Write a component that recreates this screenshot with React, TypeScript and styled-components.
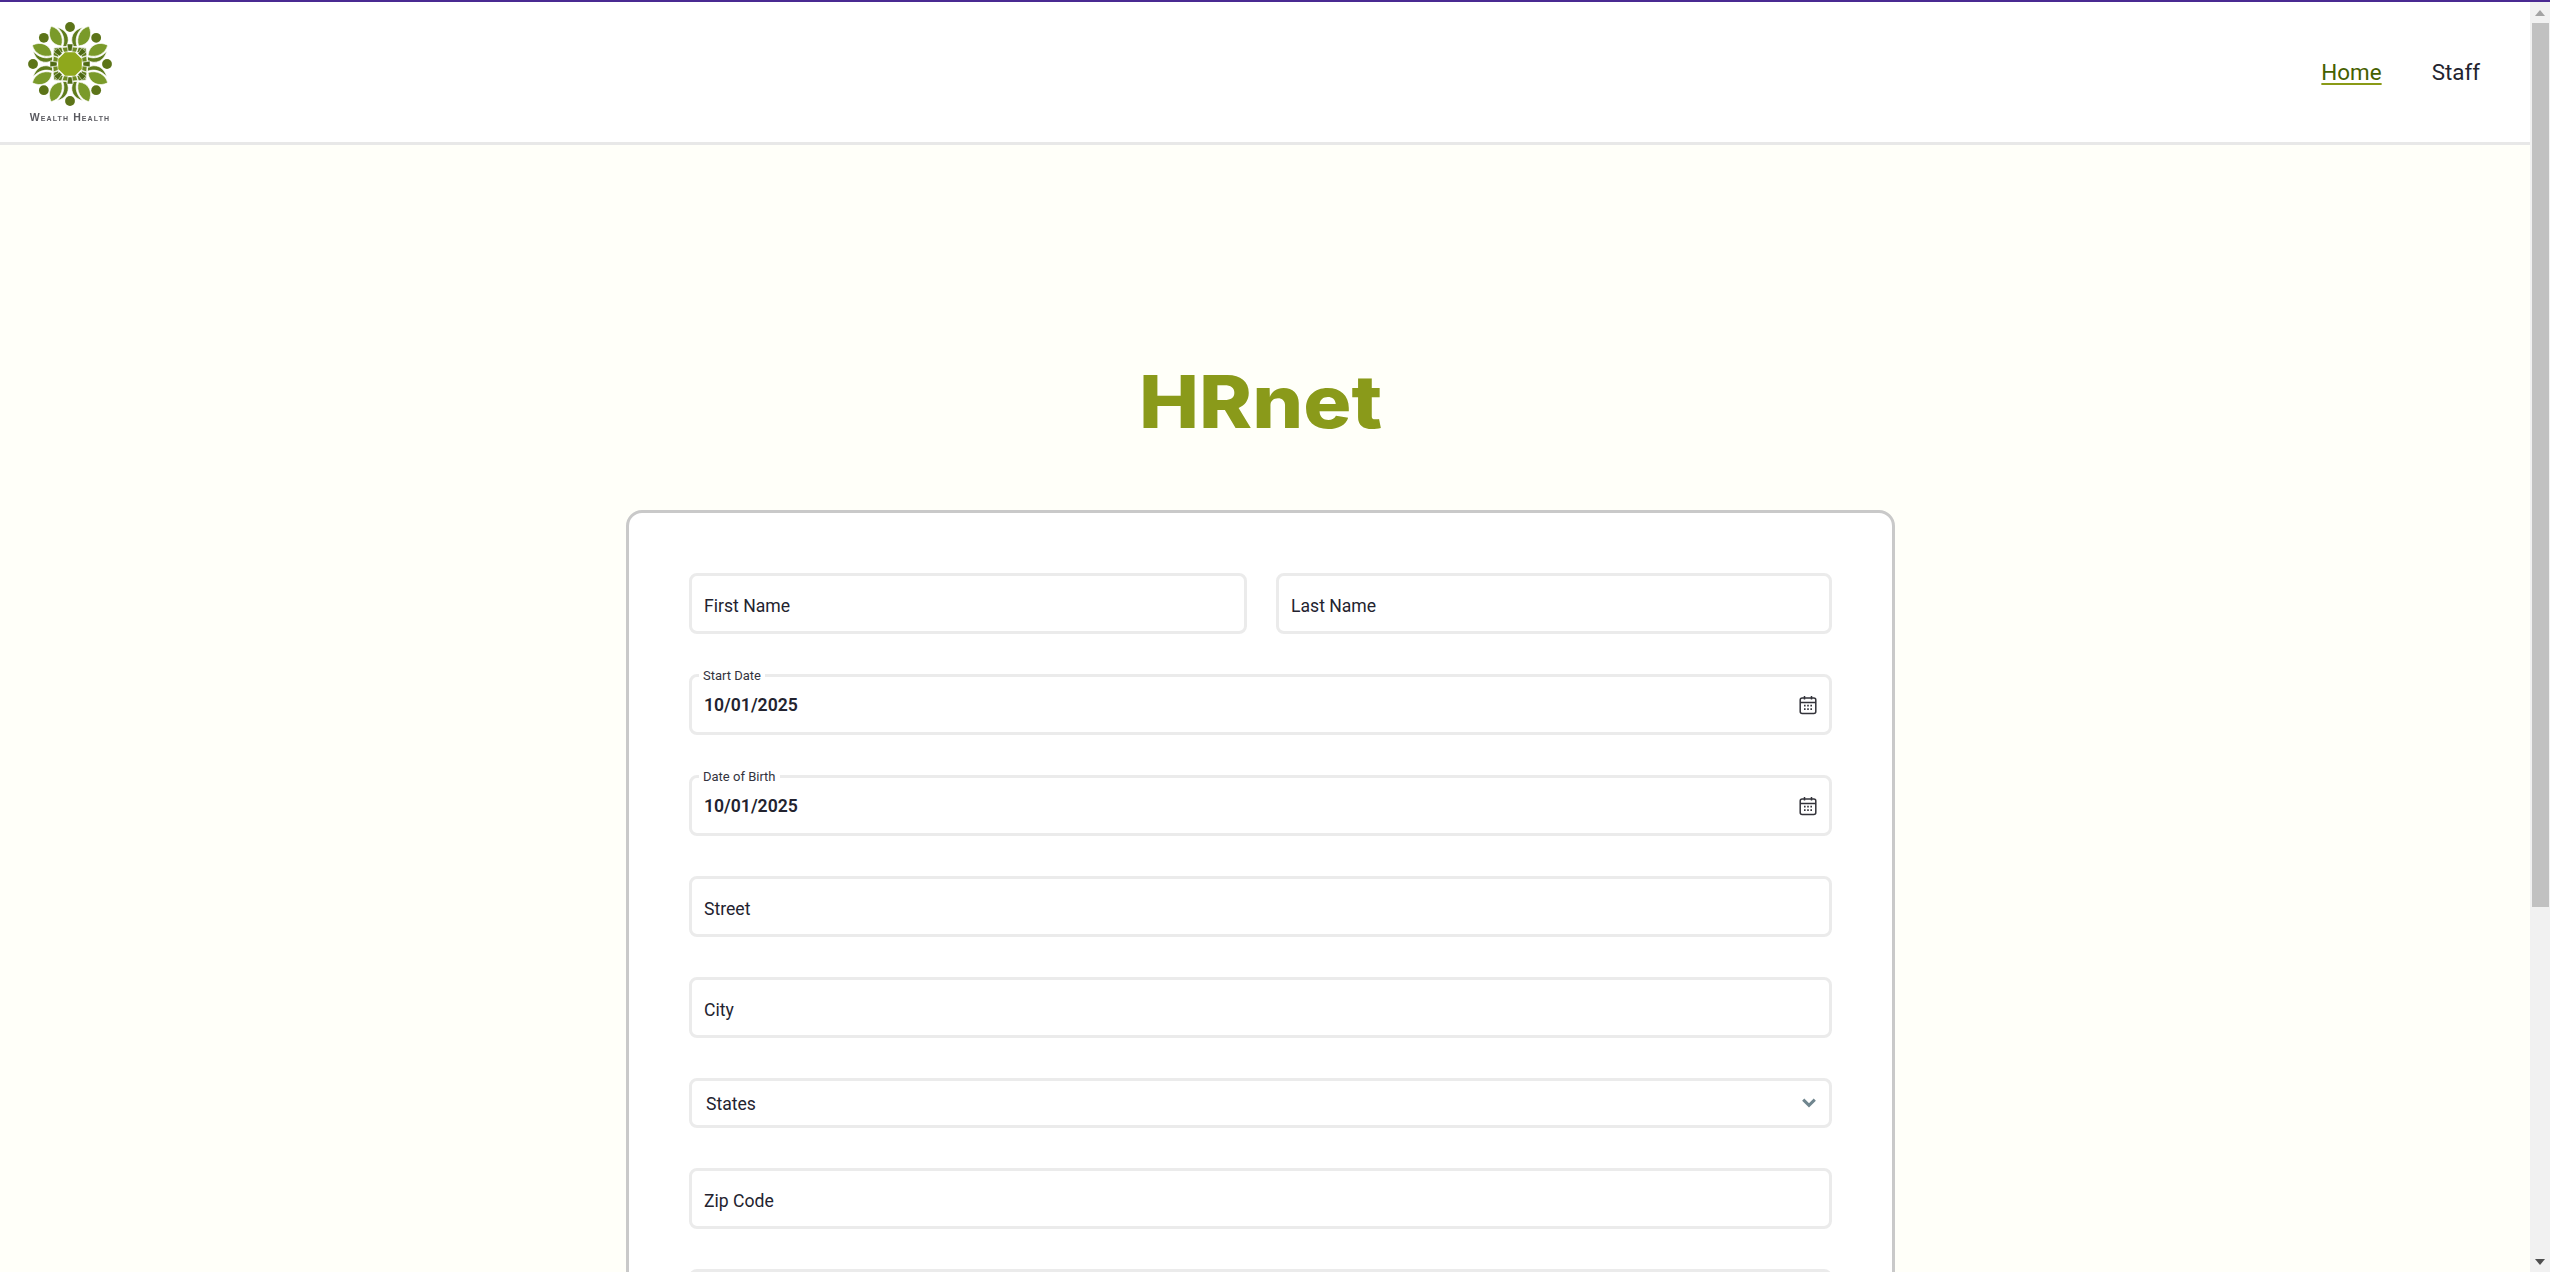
import styled, { createGlobalStyle } from 'styled-components';

const GlobalStyle = createGlobalStyle`
  html, body {
    margin: 0;
    padding: 0;
    height: 100%;
    overflow: hidden;
    background: #fffff9;
    font-family: Roboto, "Liberation Sans", sans-serif;
    color: #23232f;
  }
`;

const TopLine = styled.div`
  height: 2px;
  background: #4a2a92;
`;

const Shell = styled.div`
  display: flex;
  height: calc(100vh - 2px);
  overflow: hidden;
`;

const Content = styled.div`
  flex: 1;
  min-width: 0;
  background: #fffff9;
`;

const ScrollTrack = styled.div`
  flex: none;
  display: flex;
  flex-direction: column;
  width: 20px;
  background: #f1f1f1;
`;

const ScrollButton = styled.div`
  flex: none;
  display: flex;
  align-items: center;
  justify-content: center;
  height: 21px;
`;

const ScrollThumb = styled.div`
  flex: none;
  height: 884px;
  margin: 0 1px 0 2px;
  background: #c1c1c1;
`;

const ScrollSpacer = styled.div`
  flex: 1;
`;

const Header = styled.header`
  display: flex;
  justify-content: space-between;
  align-items: flex-start;
  height: 140px;
  padding: 0 50px 0 28px;
  background: #fff;
  border-bottom: 3px solid #e8e8e8;
`;

const Brand = styled.div`
  display: flex;
  flex-direction: column;
  align-items: center;
  width: 84px;
  padding-top: 20px;
`;

const BrandName = styled.span`
  margin-top: 6px;
  font-family: "Liberation Sans", sans-serif;
  font-size: 10.5px;
  line-height: 10px;
  font-weight: 700;
  font-variant: small-caps;
  letter-spacing: 1.1px;
  white-space: nowrap;
  color: #5a5a60;
  filter: blur(0.3px);
`;

const Nav = styled.nav`
  display: flex;
  gap: 50px;
  height: 140px;
  align-items: center;
`;

const NavLink = styled.a<{ $active?: boolean }>`
  font-size: 22.4px;
  color: ${(p) => (p.$active ? '#456000' : '#23232f')};
  text-decoration: ${(p) => (p.$active ? 'underline' : 'none')};
  text-decoration-color: #8a9a17;
  text-underline-offset: 3px;
`;

const Main = styled.main`
  display: flex;
  flex-direction: column;
  align-items: center;
  padding: 0 9px 60px 0;
`;

const Title = styled.h1`
  margin: 213px 0 64px;
  font-family: Inter, sans-serif;
  font-size: 73px;
  line-height: 88px;
  font-weight: 800;
  color: #8a9a1a;
  transform: scaleX(1.1);
`;

const Card = styled.form`
  display: flex;
  flex-direction: column;
  gap: 40px;
  box-sizing: border-box;
  width: 1269px;
  padding: 60px;
  background: #fff;
  border: 3px solid #c9c9c9;
  border-radius: 16px;
`;

const TwoCols = styled.div`
  display: grid;
  grid-template-columns: 558px 1fr;
  gap: 29px;
`;

const FieldBox = styled.div`
  position: relative;
  display: flex;
  align-items: center;
  box-sizing: border-box;
  height: 61px;
  padding: 0 12px;
  border: 3px solid #ebebeb;
  border-radius: 8px;
  background: #fff;
`;

const TextInput = styled.input<{ $dated?: boolean }>`
  flex: 1;
  min-width: 0;
  padding: ${(p) => (p.$dated ? '0' : '4px 0 0')};
  border: 0;
  outline: 0;
  background: transparent;
  font-family: Roboto, sans-serif;
  font-size: 17.6px;
  font-weight: ${(p) => (p.$dated ? 600 : 400)};
  color: #23232f;

  &::placeholder {
    color: #23232f;
    opacity: 1;
  }
`;

const FloatLabel = styled.label`
  position: absolute;
  top: -9px;
  left: 7px;
  padding: 0 4px;
  background: #fff;
  font-size: 13px;
  line-height: 16px;
  color: #33333d;
`;

const SelectBox = styled.div`
  display: flex;
  align-items: center;
  justify-content: space-between;
  box-sizing: border-box;
  height: 50px;
  padding: 2px 13px 0 14px;
  border: 3px solid #ebebeb;
  border-radius: 8px;
  background: #fff;
  font-size: 17.6px;
`;

const CalendarSvg = styled.svg`
  flex: none;
  color: #33333a;
`;

const ChevronSvg = styled.svg`
  flex: none;
  margin-top: -2px;
  color: #70868f;
`;

function CalendarIcon() {
  return (
    <CalendarSvg width="18" height="20" viewBox="0 0 18 20" fill="none" stroke="currentColor" strokeWidth="1.5">
      <rect x="1.2" y="3" width="15.6" height="15.6" rx="2" />
      <path d="M1.2 7.4h15.6M5.5 1v3.6M12.5 1v3.6" />
      <path d="M5 10.7h1.6M8.2 10.7h1.6M11.4 10.7H13M5 14.2h1.6M8.2 14.2h1.6M11.4 14.2H13" strokeWidth="1.8" />
    </CalendarSvg>
  );
}

function ChevronIcon() {
  return (
    <ChevronSvg width="14" height="10" viewBox="0 0 14 10" fill="none" stroke="currentColor" strokeWidth="3">
      <path d="M1.2 1.6L7 7.4l5.8-5.8" />
    </ChevronSvg>
  );
}

const petals = [0, 1, 2, 3, 4, 5, 6, 7];

// one leaf cluster points up; even ones are mirrored so pairs flank each dot
function LeafCluster() {
  return (
    <g stroke="#fff" strokeWidth="0.6">
      <path d="M-1 -20C-11 -25 -10 -36 -3 -42C4 -37 5 -27 -1 -20z" fill="#7a9a2a" />
      <path d="M0 -19C5 -24 6 -32 2 -39C10 -33 11 -24 3.5 -17.5z" fill="#5f7c1c" />
      <path d="M-9 -21L-1.4 -18.8L-1.8 -13.4L-7.4 -13.8z" fill="#5f7c1c" />
      <path d="M-1 -18.4L4.6 -16.6L3 -12L-1.2 -13.2z" fill="#6f8b22" />
    </g>
  );
}

function LogoMark() {
  return (
    <svg width="84" height="84" viewBox="-42 -42 84 84" style={{ filter: 'blur(0.35px)' }}>
      {petals.map((i) => (
        <circle key={`dot-${i}`} cx="0" cy="-37" r="4.9" fill="#5c7418" transform={`rotate(${i * 45})`} />
      ))}
      {petals.map((i) => (
        <g key={`leaf-${i}`} transform={`rotate(${22.5 + i * 45}) ${i % 2 === 0 ? 'scale(-1,1)' : ''}`}>
          <LeafCluster />
        </g>
      ))}
      {petals.map((i) => (
        <path
          key={`wedge-${i}`}
          d="M-3 -20H3L1.8 -13H-1.8z"
          fill="#4f6a14"
          stroke="#fff"
          strokeWidth="0.5"
          transform={`rotate(${i * 45})`}
        />
      ))}
      <polygon
        points="-4.9,-11.8 4.9,-11.8 11.8,-4.9 11.8,4.9 4.9,11.8 -4.9,11.8 -11.8,4.9 -11.8,-4.9"
        fill="#8fa81c"
      />
    </svg>
  );
}

function TextField({ placeholder }: { placeholder?: string }) {
  return (
    <FieldBox>
      <TextInput placeholder={placeholder} aria-label={placeholder} />
    </FieldBox>
  );
}

function DateField({ label, value }: { label: string; value: string }) {
  return (
    <FieldBox>
      <FloatLabel>{label}</FloatLabel>
      <TextInput $dated defaultValue={value} aria-label={label} />
      <CalendarIcon />
    </FieldBox>
  );
}

function SelectField({ label }: { label: string }) {
  return (
    <SelectBox>
      <span>{label}</span>
      <ChevronIcon />
    </SelectBox>
  );
}

export default function App() {
  return (
    <>
      <GlobalStyle />
      <TopLine />
      <Shell>
        <Content>
          <Header>
            <Brand>
              <LogoMark />
              <BrandName>Wealth Health</BrandName>
            </Brand>
            <Nav>
              <NavLink $active href="#">Home</NavLink>
              <NavLink href="#">Staff</NavLink>
            </Nav>
          </Header>
          <Main>
            <Title>HRnet</Title>
            <Card>
              <TwoCols>
                <TextField placeholder="First Name" />
                <TextField placeholder="Last Name" />
              </TwoCols>
              <DateField label="Start Date" value="10/01/2025" />
              <DateField label="Date of Birth" value="10/01/2025" />
              <TextField placeholder="Street" />
              <TextField placeholder="City" />
              <SelectField label="States" />
              <TextField placeholder="Zip Code" />
              <TextField />
            </Card>
          </Main>
        </Content>
        <ScrollTrack>
          <ScrollButton>
            <svg width="12" height="8" viewBox="0 0 12 8"><path d="M6 1l5 6H1z" fill="#a3a3a3" /></svg>
          </ScrollButton>
          <ScrollThumb />
          <ScrollSpacer />
          <ScrollButton>
            <svg width="12" height="8" viewBox="0 0 12 8"><path d="M6 7L1 1h10z" fill="#505050" /></svg>
          </ScrollButton>
        </ScrollTrack>
      </Shell>
    </>
  );
}
